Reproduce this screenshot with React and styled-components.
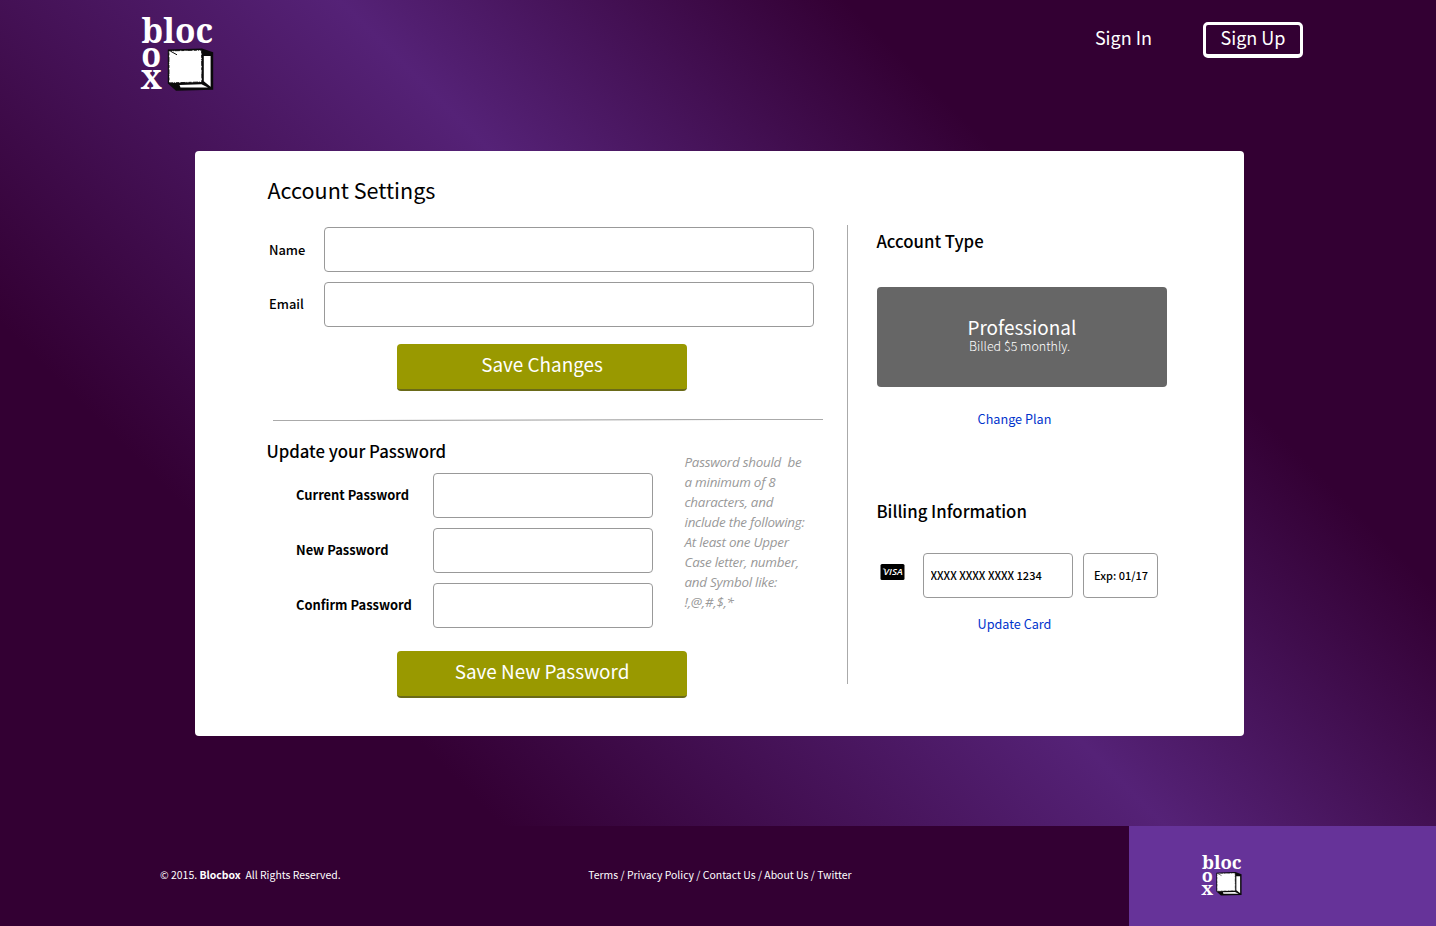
import React from 'react';
import styled, { createGlobalStyle } from 'styled-components';

const sans = '"Noto Sans CJK SC", "Open Sans", sans-serif';

const GlobalStyle = createGlobalStyle`
  *, *::before, *::after { box-sizing: border-box; }
  body { margin: 0; font-family: ${sans}; color: #000; }
  input, button { font-family: inherit; margin: 0; }
  h1, h2, p { margin: 0; }
`;

const Page = styled.div`
  width: 1436px;
  height: 926px;
  display: flex;
  flex-direction: column;
  overflow: hidden;
  background: linear-gradient(45deg, #330033 25.5%, #552277 53.6%, #330033 75%);
`;

const Header = styled.header`
  height: 151px;
  flex: none;
  display: flex;
  justify-content: space-between;
  align-items: flex-start;
  padding: 14px 133px 0 140px;
`;

const Nav = styled.nav`
  display: flex;
  align-items: center;
  gap: 51px;
  padding-top: 8px;
`;

const NavLink = styled.a`
  color: #fff;
  font-size: 18px;
  line-height: 30px;
  white-space: nowrap;
  padding-bottom: 6px;
`;

const SignUpLink = styled(NavLink)`
  width: 100px;
  height: 36px;
  border: 3px solid #fff;
  border-bottom-width: 4px;
  border-radius: 5px;
  padding: 0;
  line-height: 25px;
  text-align: center;
`;

const Card = styled.main`
  flex: none;
  display: flex;
  width: 1049px;
  height: 585px;
  margin-left: 195px;
  padding: 24px 0 0 71px;
  background: #fff;
  border-radius: 4px;
`;

const Settings = styled.div`
  width: 581px;
`;

const Title = styled.h1`
  font-size: 21.55px;
  font-weight: 400;
  line-height: 30px;
  padding-left: 1.5px;
`;

const SectionTitle = styled.h2`
  font-size: 16.75px;
  font-weight: 500;
  line-height: 24px;
  padding-left: 0.4px;
`;

const Form = styled.form`
  display: flex;
  flex-direction: column;
  gap: 10px;
`;

const ProfileForm = styled(Form)`
  padding: 22px 0 0 3px;
`;

const PasswordForm = styled(Form)`
  width: 387px;
  padding: 10px 0 0 30px;
`;

const Field = styled.label`
  display: flex;
  align-items: center;
  justify-content: space-between;
`;

const ProfileField = styled(Field)`
  width: 545px;
`;

const FieldLabel = styled.span`
  font-size: 12.9px;
  font-weight: ${(p) => (p.$bold ? 700 : 500)};
  line-height: 20px;
  padding-bottom: ${(p) => p.$lift}px;
  white-space: nowrap;
`;

const TextInput = styled.input`
  width: ${(p) => p.$width}px;
  height: 45px;
  border: 1px solid #999;
  border-radius: 4px;
  background: #fff;
  padding: 0 0 2px ${(p) => p.$inset || 6.5}px;
  font-size: 11px;
  font-weight: 500;
  color: #000;
`;

const SubmitButton = styled.button`
  display: block;
  width: 290px;
  height: 47px;
  border: 0;
  border-bottom: 2px solid #6a6a18;
  border-radius: 4px;
  background: #999900;
  color: #fff;
  font-size: 18.9px;
  line-height: 40px;
  padding: 0 0 5px;
  margin: ${(p) => p.$top}px 0 0 131px;
`;

const Rule = styled.div`
  width: 550px;
  height: 2px;
  margin: 28px 0 18px 7px;
  background:
    linear-gradient(to right, transparent 15%, #aaa 75%) 0 0 / 100% 1px no-repeat,
    linear-gradient(to right, #aaa 25%, transparent 85%) 0 1px / 100% 1px no-repeat;
`;

const PasswordArea = styled.div`
  display: flex;
  align-items: flex-start;
  justify-content: space-between;
  width: 557px;
`;

const Hint = styled.p`
  width: 139px;
  margin-top: -11px;
  padding-left: 0.5px;
  font-family: "Open Sans", sans-serif;
  font-style: italic;
  font-size: 13.4px;
  letter-spacing: -0.24px;
  line-height: 20px;
  color: #999;
  white-space: pre;
`;

const Account = styled.aside`
  width: 320px;
  height: 459px;
  margin-top: 50px;
  border-left: 1px solid #aaa;
  padding: 4px 0 0 28px;
`;

const Plan = styled.div`
  width: 290px;
  height: 100px;
  margin: 34px 0 0 1px;
  padding: 26px 0 0 90.5px;
  border-radius: 4px;
  background: #666;
  color: #fff;
`;

const PlanName = styled.div`
  font-size: 18.9px;
  line-height: 27px;
`;

const PlanPrice = styled.div`
  font-size: 12.5px;
  font-weight: 300;
  line-height: 14px;
  margin-top: -1px;
  padding-left: 1.5px;
`;

const ActionLink = styled.a`
  display: block;
  width: 277px;
  text-align: center;
  font-size: 12.65px;
  line-height: 20px;
  color: #0033cc;
`;

const PlanLink = styled(ActionLink)`
  margin: 22px 0 70px;
`;

const CardLink = styled(ActionLink)`
  margin-top: 16px;
`;

const Payment = styled.div`
  display: flex;
  align-items: center;
  gap: 10px;
  margin: 30px 0 0 4px;
`;

const VisaBadge = styled.svg`
  display: block;
  width: 25px;
  height: 16px;
  margin: 0 8px 8px 0;
`;

const Footer = styled.footer`
  display: flex;
  height: 100px;
  margin-top: auto;
  background: #330033;
  color: #fff;
  font-size: 10.45px;
  line-height: 16px;
`;

const Copyright = styled.p`
  width: 428px;
  padding: 41px 0 0 160px;
  white-space: pre;
`;

const FooterLinks = styled.nav`
  width: 701px;
  padding: 41px 0 0 160.3px;
`;

const FooterBrand = styled.div`
  flex: 1;
  background: #663399;
  padding: 27px 0 0 71.5px;
`;

const LogoArt = styled.svg`
  display: block;
  width: ${(p) => p.$width}px;
  height: auto;
  overflow: visible;
`;

function Logo({ width }) {
  return (
    <LogoArt $width={width} viewBox="0 0 74 78" aria-label="blocbox">
      <g fill="#fff" fontFamily='"Noto Serif", "DejaVu Serif Condensed", serif' fontWeight="700" fontSize="34">
        <text x="1.6" y="28.5" textLength="71.6" lengthAdjust="spacingAndGlyphs">bloc</text>
        <text x="1.2" y="52.8" textLength="20" lengthAdjust="spacingAndGlyphs">o</text>
        <text x="0.6" y="75" textLength="21.4" lengthAdjust="spacingAndGlyphs">x</text>
      </g>
      <path d="M27.8 35.6 62 34.4 73.2 38.2V75.8L36 76.8 27.8 69.5Z" fill="#0a0a0a" />
      <path d="M63.8 42H70.6V72.8L63.8 67.2Z" fill="#fff" />
      <path d="M39.5 71 61.5 70.2 68 73.6H40.5Z" fill="#fff" />
      <path d="M28.9 36.9 61.6 36.1 61.9 68 29 68.9Z" fill="#fff" />
      <path d="M30.5 37.2 37 40.8" stroke="#0a0a0a" strokeWidth="1" fill="none" />
      <path d="M28.9 36.9 61.6 36.1 61.9 68 29 68.9Z" fill="none" stroke="#0a0a0a" strokeWidth="0.9" strokeDasharray="3 1.2 1 0.8 5 1.5" />
    </LogoArt>
  );
}

function Visa() {
  return (
    <VisaBadge viewBox="0 0 25 16" aria-label="Visa">
      <rect x="0.5" width="24" height="16" rx="1.5" fill="#000" />
      <path d="M2.8 4.9H4.8" stroke="#fff" strokeWidth="0.7" />
      <text x="3.6" y="11.4" fill="#fff" fontFamily="Open Sans, sans-serif" fontStyle="italic" fontWeight="600" fontSize="9.6" textLength="19" lengthAdjust="spacingAndGlyphs">VISA</text>
    </VisaBadge>
  );
}

const hint = [
  'Password should  be',
  'a minimum of 8',
  'characters, and',
  'include the following:',
  'At least one Upper',
  'Case letter, number,',
  'and Symbol like:',
  '!,@,#,$,*',
].join('\n');

const passwordFields = [
  { label: 'Current Password', lift: 1 },
  { label: 'New Password', lift: 2 },
  { label: 'Confirm Password', lift: 2 },
];

export default function App() {
  return (
    <>
      <GlobalStyle />
      <Page>
        <Header>
          <Logo width={74} />
          <Nav>
            <NavLink>Sign In</NavLink>
            <SignUpLink>Sign Up</SignUpLink>
          </Nav>
        </Header>

        <Card>
          <Settings>
            <Title>Account Settings</Title>
            <ProfileForm>
              <ProfileField>
                <FieldLabel $lift={0}>Name</FieldLabel>
                <TextInput $width={490} />
              </ProfileField>
              <ProfileField>
                <FieldLabel $lift={2}>Email</FieldLabel>
                <TextInput $width={490} />
              </ProfileField>
            </ProfileForm>
            <SubmitButton $top={17}>Save Changes</SubmitButton>
            <Rule />
            <SectionTitle>Update your Password</SectionTitle>
            <PasswordArea>
              <PasswordForm>
                {passwordFields.map((field) => (
                  <Field key={field.label}>
                    <FieldLabel $bold $lift={field.lift}>{field.label}</FieldLabel>
                    <TextInput $width={220} />
                  </Field>
                ))}
              </PasswordForm>
              <Hint>{hint}</Hint>
            </PasswordArea>
            <SubmitButton $top={23}>Save New Password</SubmitButton>
          </Settings>

          <Account>
            <SectionTitle>Account Type</SectionTitle>
            <Plan>
              <PlanName>Professional</PlanName>
              <PlanPrice>Billed $5 monthly.</PlanPrice>
            </Plan>
            <PlanLink>Change Plan</PlanLink>
            <SectionTitle>Billing Information</SectionTitle>
            <Payment>
              <Visa />
              <TextInput $width={150} defaultValue="XXXX XXXX XXXX 1234" />
              <TextInput $width={75} $inset={10} defaultValue="Exp: 01/17" />
            </Payment>
            <CardLink>Update Card</CardLink>
          </Account>
        </Card>

        <Footer>
          <Copyright>© 2015. <b>Blocbox</b>  All Rights Reserved.</Copyright>
          <FooterLinks>Terms / Privacy Policy / Contact Us / About Us / Twitter</FooterLinks>
          <FooterBrand>
            <Logo width={41} />
          </FooterBrand>
        </Footer>
      </Page>
    </>
  );
}
